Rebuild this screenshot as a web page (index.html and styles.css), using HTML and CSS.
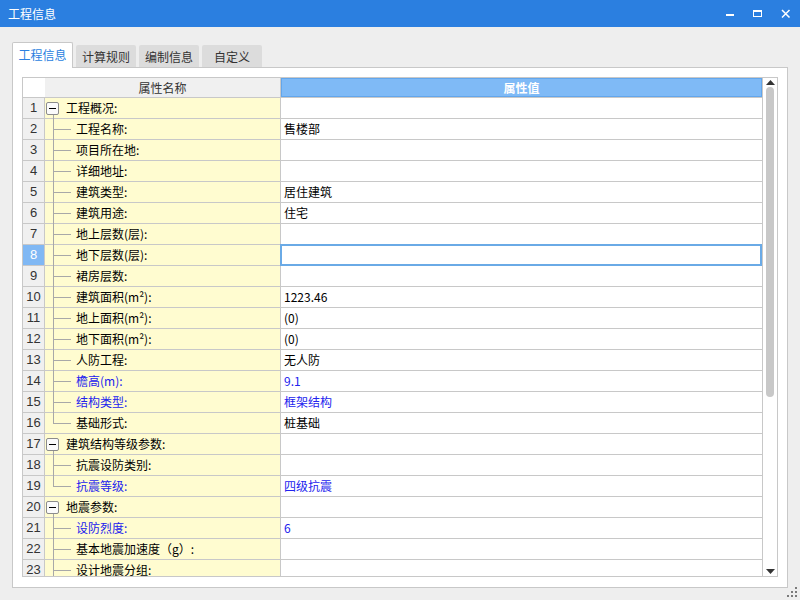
FILE: index.html
```html
<!DOCTYPE html>
<html lang="zh-CN">
<head>
<meta charset="utf-8">
<title>工程信息</title>
<link rel="stylesheet" href="styles.css">
</head>
<body>
<div class="window">
  <div class="titlebar">
    <div class="title">工程信息</div>
    <div class="ctrl"><svg width="10" height="10" viewBox="0 0 10 10"><rect x="1" y="5" width="8" height="2" fill="#fff"/></svg></div>
    <div class="ctrl"><svg width="10" height="10" viewBox="0 0 10 10"><rect x="0.5" y="1.5" width="8" height="6" fill="none" stroke="#fff" stroke-width="1"/><rect x="0" y="1" width="9" height="2" fill="#fff"/></svg></div>
    <div class="ctrl"><svg width="10" height="10" viewBox="0 0 10 10"><path d="M1 1 L8.5 8.5 M8.5 1 L1 8.5" stroke="#fff" stroke-width="1.5"/></svg></div>
  </div>
  <div class="content">
    <div class="tabs">
      <div class="tab active">工程信息</div>
      <div class="tab">计算规则</div>
      <div class="tab">编制信息</div>
      <div class="tab">自定义</div>
    </div>
    <div class="panel">
      <div class="grid">
        <div class="rows">
          <div class="row head">
            <div class="num"></div>
            <div class="name">属性名称</div>
            <div class="val">属性值</div>
          </div>

          <div class="row group"><div class="num">1</div><div class="name"><span class="box"></span><span class="stem"></span>工程概况:</div><div class="val"></div></div>
          <div class="row"><div class="num">2</div><div class="name"><span class="vline"></span><span class="hline"></span>工程名称:</div><div class="val">售楼部</div></div>
          <div class="row"><div class="num">3</div><div class="name"><span class="vline"></span><span class="hline"></span>项目所在地:</div><div class="val"></div></div>
          <div class="row"><div class="num">4</div><div class="name"><span class="vline"></span><span class="hline"></span>详细地址:</div><div class="val"></div></div>
          <div class="row"><div class="num">5</div><div class="name"><span class="vline"></span><span class="hline"></span>建筑类型:</div><div class="val">居住建筑</div></div>
          <div class="row"><div class="num">6</div><div class="name"><span class="vline"></span><span class="hline"></span>建筑用途:</div><div class="val">住宅</div></div>
          <div class="row"><div class="num">7</div><div class="name"><span class="vline"></span><span class="hline"></span>地上层数(层):</div><div class="val"></div></div>
          <div class="row selected"><div class="num">8</div><div class="name"><span class="vline"></span><span class="hline"></span>地下层数(层):</div><div class="val"></div></div>
          <div class="row"><div class="num">9</div><div class="name"><span class="vline"></span><span class="hline"></span>裙房层数:</div><div class="val"></div></div>
          <div class="row"><div class="num">10</div><div class="name"><span class="vline"></span><span class="hline"></span>建筑面积(m²):</div><div class="val">1223.46</div></div>
          <div class="row"><div class="num">11</div><div class="name"><span class="vline"></span><span class="hline"></span>地上面积(m²):</div><div class="val">(0)</div></div>
          <div class="row"><div class="num">12</div><div class="name"><span class="vline"></span><span class="hline"></span>地下面积(m²):</div><div class="val">(0)</div></div>
          <div class="row"><div class="num">13</div><div class="name"><span class="vline"></span><span class="hline"></span>人防工程:</div><div class="val">无人防</div></div>
          <div class="row blue"><div class="num">14</div><div class="name"><span class="vline"></span><span class="hline"></span>檐高(m):</div><div class="val">9.1</div></div>
          <div class="row blue"><div class="num">15</div><div class="name"><span class="vline"></span><span class="hline"></span>结构类型:</div><div class="val">框架结构</div></div>
          <div class="row last"><div class="num">16</div><div class="name"><span class="vline"></span><span class="hline"></span>基础形式:</div><div class="val">桩基础</div></div>

          <div class="row group"><div class="num">17</div><div class="name"><span class="box"></span><span class="stem"></span>建筑结构等级参数:</div><div class="val"></div></div>
          <div class="row"><div class="num">18</div><div class="name"><span class="vline"></span><span class="hline"></span>抗震设防类别:</div><div class="val"></div></div>
          <div class="row blue last"><div class="num">19</div><div class="name"><span class="vline"></span><span class="hline"></span>抗震等级:</div><div class="val">四级抗震</div></div>

          <div class="row group"><div class="num">20</div><div class="name"><span class="box"></span><span class="stem"></span>地震参数:</div><div class="val"></div></div>
          <div class="row blue"><div class="num">21</div><div class="name"><span class="vline"></span><span class="hline"></span>设防烈度:</div><div class="val">6</div></div>
          <div class="row"><div class="num">22</div><div class="name"><span class="vline"></span><span class="hline"></span>基本地震加速度（g）:</div><div class="val"></div></div>
          <div class="row"><div class="num">23</div><div class="name"><span class="vline"></span><span class="hline"></span>设计地震分组:</div><div class="val"></div></div>
        </div>
        <div class="scrollbar">
          <svg class="arrow up" width="9" height="5" viewBox="0 0 9 5"><polygon points="0,5 4.5,0 9,5" fill="#333"/></svg>
          <div class="thumb"></div>
          <div class="spacer"></div>
          <svg class="arrow down" width="9" height="5" viewBox="0 0 9 5"><polygon points="0,0 9,0 4.5,5" fill="#333"/></svg>
        </div>
      </div>
    </div>
  </div>
  <svg class="grip" width="11" height="11" viewBox="0 0 11 11">
    <rect x="8" y="0" width="2" height="2" fill="#7a7a7a"/>
    <rect x="4" y="4" width="2" height="2" fill="#7a7a7a"/>
    <rect x="8" y="4" width="2" height="2" fill="#7a7a7a"/>
    <rect x="0" y="8" width="2" height="2" fill="#7a7a7a"/>
    <rect x="4" y="8" width="2" height="2" fill="#7a7a7a"/>
    <rect x="8" y="8" width="2" height="2" fill="#7a7a7a"/>
  </svg>
</div>
</body>
</html>
```

FILE: styles.css
```css
* { box-sizing: border-box; }
html, body { margin: 0; padding: 0; }
body {
  width: 800px;
  height: 600px;
  overflow: hidden;
  background: #eeeeee;
  font-family: "Noto Sans CJK SC", "Microsoft YaHei", sans-serif;
  font-size: 12px;
  color: #000;
}
.window {
  position: relative;
  width: 800px;
  height: 600px;
  display: flex;
  flex-direction: column;
}
.titlebar {
  height: 27px;
  flex: none;
  background: #2b7fe0;
  color: #fff;
  display: flex;
  align-items: center;
  padding-left: 8px;
}
.title { flex: 1; font-size: 12px; line-height: 27px; }
.ctrl {
  width: 28px;
  height: 27px;
  display: flex;
  align-items: center;
  justify-content: center;
}
.content {
  padding: 15px 0 0 12px;
}
.tabs {
  display: flex;
  align-items: flex-end;
  gap: 3px;
  height: 25px;
}
.tab {
  width: 60px;
  height: 22px;
  background: #dcdcdc;
  border-radius: 2px 2px 0 0;
  display: flex;
  align-items: center;
  justify-content: center;
  color: #333;
  font-size: 12px;
}
.tab.active {
  width: 61px;
  height: 26px;
  background: #fff;
  border: 1px solid #c8c8c8;
  border-bottom: none;
  color: #2b7fe0;
  position: relative;
  z-index: 1;
  margin-bottom: -1px;
  padding-bottom: 2px;
}
.panel {
  width: 776px;
  height: 521px;
  background: #fff;
  border: 1px solid #c8c8c8;
  padding: 9px;
}
.grid {
  width: 756px;
  height: 500px;
  border: 1px solid #c8c8c8;
  display: flex;
  background: #fff;
}
.rows {
  width: 739px;
  height: 498px;
  overflow: hidden;
}
.row {
  display: grid;
  grid-template-columns: 22px 236px 481px;
  height: 21px;
}
.row > div {
  height: 21px;
  line-height: 20px;
  border-bottom: 1px solid #c8c8c8;
  white-space: nowrap;
}
.num {
  background: #f0f0f0;
  border-right: 1px solid #c8c8c8;
  text-align: center;
  font-family: "Liberation Sans", Arial, sans-serif;
  font-size: 13px;
  color: #333;
}
.name {
  position: relative;
  background: #fffcd0;
  border-right: 1px solid #c8c8c8;
  padding-left: 31px;
}
.val {
  background: #fff;
  padding-left: 3px;
}
.row.group .name { padding-left: 21px; }

.row.head { height: 20px; }
.row.head > div { height: 20px; line-height: 19px; }
.row.head .num { background: #fff; border-right: none; }
.row.head .name {
  background: #f0f0f0;
  text-align: center;
  padding-left: 0;
  color: #333;
}
.row.head .val {
  background: #7fbaf6;
  box-shadow: inset 0 0 0 1px #62a6ec;
  color: #fff;
  font-weight: bold;
  text-align: center;
  padding-left: 0;
}

.row.blue .name, .row.blue .val { color: #2222ee; }
.row.selected .num { background: #80b8f4; color: #fff; }
.row.selected .val { position: relative; }
.row.selected .val::after {
  content: "";
  position: absolute;
  left: -1px;
  top: -1px;
  right: 0;
  bottom: -1px;
  border: 2px solid #6aaae6;
}

.box {
  position: absolute;
  left: 1px;
  top: 4px;
  width: 13px;
  height: 13px;
  border: 1px solid #8c8c8c;
  border-radius: 2px;
  background: #fbfbfb;
}
.box::after {
  content: "";
  position: absolute;
  left: 2px;
  top: 5px;
  width: 7px;
  height: 1px;
  background: #000;
}
.stem {
  position: absolute;
  left: 8px;
  top: 17px;
  width: 1px;
  height: 5px;
  background: #a8a8a8;
}
.vline {
  position: absolute;
  left: 8px;
  top: 0;
  width: 1px;
  height: 21px;
  background: #a8a8a8;
}
.row.last .vline { height: 11px; }
.hline {
  position: absolute;
  left: 8px;
  top: 10px;
  width: 18px;
  height: 1px;
  background: #a8a8a8;
}

.scrollbar {
  width: 15px;
  height: 498px;
  border-left: 1px solid #c8c8c8;
  display: flex;
  flex-direction: column;
  align-items: center;
  background: #fff;
}
.arrow { flex: none; display: block; }
.arrow.up { margin-top: 2px; }
.arrow.down { margin-bottom: 2px; }
.thumb {
  flex: none;
  width: 8px;
  height: 310px;
  margin-top: 2px;
  border-radius: 4px;
  background: #c8c8c8;
}
.spacer { flex: 1; }
.grip {
  position: absolute;
  right: 2px;
  bottom: 2px;
}
```
